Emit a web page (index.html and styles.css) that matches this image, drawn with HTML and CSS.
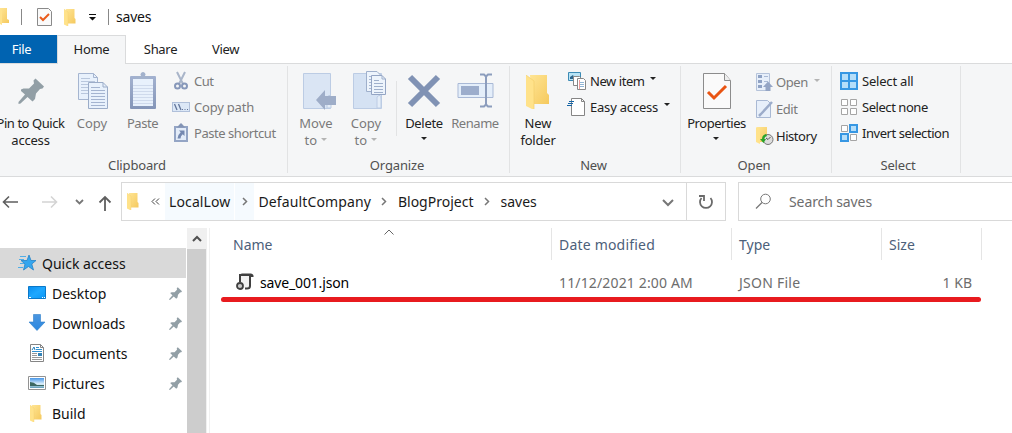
FILE: index.html
```
<!DOCTYPE html>
<html lang="en">
<head>
    <meta charset="UTF-8">
    <meta name="viewport" content="width=device-width, initial-scale=1.0">
    <title>saves</title>
    <link rel="stylesheet" href="styles.css">
</head>
<body>
    <!-- Shared icons -->
    <svg class="defs" width="0" height="0">
        <defs>
            <linearGradient id="gold" x1="0" y1="0" x2="1" y2="1">
                <stop offset="0" stop-color="#ffe594"/>
                <stop offset="1" stop-color="#f5c95e"/>
            </linearGradient>
            <linearGradient id="blue" x1="0" y1="0" x2="1" y2="1">
                <stop offset="0" stop-color="#0a8df0"/>
                <stop offset="0.5" stop-color="#1ea8ff"/>
                <stop offset="1" stop-color="#0b97f5"/>
            </linearGradient>
            <linearGradient id="arrow" x1="0" y1="0" x2="0" y2="1">
                <stop offset="0" stop-color="#4b96e0"/>
                <stop offset="1" stop-color="#2b88e0"/>
            </linearGradient>
            <linearGradient id="sky" x1="0" y1="0" x2="0" y2="1">
                <stop offset="0" stop-color="#4796e8"/>
                <stop offset="0.6" stop-color="#dff1fb"/>
                <stop offset="1" stop-color="#5c9ab5"/>
            </linearGradient>
            <linearGradient id="slate" x1="0" y1="0" x2="0" y2="1">
                <stop offset="0" stop-color="#a3b2d0"/>
                <stop offset="1" stop-color="#8495b8"/>
            </linearGradient>
            <symbol id="folder" viewBox="0 0 24 34">
                <path d="M4 0H21V18L23 20V29H6Z" fill="url(#gold)"/>
                <path d="M0 0L8 6V35L0 31Z" fill="#ffe28a"/>
                <path d="M0 0L8 6V35" fill="none" stroke="#f3cf6c" stroke-width="0.7"/>
            </symbol>
            <symbol id="pin" viewBox="0 0 26 26">
                <path d="M17.500 0.500L26 8.500L24.500 10.500L22 11L18 15.500L17 21L14.500 23.500L9.500 19L2.500 25.500L0.500 26V24L7 16.500L3 13V11.500L5.500 10.500L11 10.500L16 5.500L15.500 2.500Z" fill="#929fa6"/>
            </symbol>
            <symbol id="page" viewBox="0 0 30 36">
                <path d="M0.500 0.500H15.500L19.500 4.500V26.500H0.500Z" fill="#e8f1fc" stroke="#a5b5d0"/>
                <path d="M15.500 0.500V4.500H19.500" fill="none" stroke="#a5b5d0"/>
                <path d="M3 5.500H12M3 8.500H17M3 11.500H17M3 14.500H17M3 17.500H17M3 20.500H17" stroke="#b9c7dd"/>
                <path d="M10.500 9.500H25L29.500 14V35.500H10.500Z" fill="#e8f1fc" stroke="#9bacc8"/>
                <path d="M25 9.500V14H29.500" fill="none" stroke="#9bacc8"/>
                <path d="M13 14.500H22M13 17.500H27M13 20.500H27M13 23.500H27M13 26.500H27M13 29.500H27M13 32.500H27" stroke="#a4b4d0"/>
            </symbol>
        </defs>
    </svg>

    <div class="titlebar">
        <svg class="tb-edge" width="10" height="18"><path d="M0 0H7V11L9 12V15H0Z" fill="url(#gold)"/><path d="M0 2L2 3V17L0 16Z" fill="#ffe28a"/></svg>
        <span class="tb-line"></span>
        <svg class="tb-check" width="15" height="18"><path d="M0.500 0.500H11.500L14.500 3.500V17.500H0.500Z" fill="#fafafa" stroke="#8a8a8a"/><path d="M3 9L6 12L12 6" fill="none" stroke="#e95b1b" stroke-width="2"/></svg>
        <svg class="tb-folder" width="12" height="17"><use href="#folder"/></svg>
        <svg class="tb-menu" width="7" height="7"><path d="M0 0H7V1H0ZM0 3H7L3.500 6.500Z" fill="#111"/></svg>
        <span class="tb-line"></span>
        <span class="tb-title">saves</span>
    </div>

    <div class="tabs">
        <div class="tab file">File</div>
        <div class="tab home">Home</div>
        <div class="tab share">Share</div>
        <div class="tab view">View</div>
    </div>

    <div class="ribbon">
        <div class="group clipboard">
            <div class="group-body">
                <div class="big pin">
                    <svg width="40" height="40"><use href="#pin" x="8" y="7" width="26" height="26"/></svg>
                    <span class="tight">Pin to Quick</span><span class="snug">access</span>
                </div>
                <div class="big copy disabled">
                    <svg width="40" height="40"><use href="#page" x="6" y="2" width="30" height="36"/></svg>
                    <span>Copy</span>
                </div>
                <div class="big paste disabled">
                    <svg width="40" height="40">
                        <rect x="7" y="5" width="26" height="33" rx="1" fill="url(#slate)"/>
                        <rect x="10" y="8" width="20" height="27" fill="#e8f1fc"/>
                        <path d="M10 14.500H30M10 17.500H30M10 20.500H30M10 23.500H30M10 26.500H30M10 29.500H30M10 32.500H30" stroke="#cfdaec"/>
                        <path d="M12 8L14 5H18A2.500 2.500 0 1 1 22 5H26L28 8Z" fill="#a3b2cc"/>
                    </svg>
                    <span class="tight">Paste</span>
                </div>
                <div class="smalls disabled">
                    <div class="small"><svg width="18" height="18"><path d="M5 0L11 12M13 0L7 12" stroke="#a9b5c9" stroke-width="2"/><circle cx="5.500" cy="14" r="2.500" fill="none" stroke="#8798ba" stroke-width="2"/><circle cx="12.500" cy="14" r="2.500" fill="none" stroke="#8798ba" stroke-width="2"/></svg><span class="tight">Cut</span></div>
                    <div class="small"><svg width="18" height="18"><rect x="0.500" y="4.500" width="17" height="9" fill="#dce8f7" stroke="#b0c0da"/><path d="M2.500 6L5 12M6.500 6L9 12" stroke="#63769b" stroke-width="1.300"/><path d="M10 11.500H11M12.500 11.500H13.500M15 11.500H16" stroke="#63769b"/></svg><span class="snug">Copy path</span></div>
                    <div class="small"><svg width="18" height="18"><path d="M2 2H16V18H2Z" fill="#94a5c5"/><path d="M4 4H14V16H4Z" fill="#e3ecf9"/><path d="M5 3.500L7 1L9 -1L11 1L13 3.500Z" fill="#8394b5"/><path d="M7 6.500H12.500V12L10.700 10.200Q8.500 12 8.500 14.500H5.500Q5.500 11 8.700 8.200Z" fill="#7488b0"/></svg><span class="tight">Paste shortcut</span></div>
                </div>
            </div>
            <div class="group-name">Clipboard</div>
        </div>

        <div class="group organize">
            <div class="group-body">
                <div class="big move disabled">
                    <svg width="40" height="40"><path d="M7.500 2.500H34.500V37.500H7.500Z" fill="#dae5f4" stroke="#bccce4"/><path d="M31 26Q35 22 35 28V37H31Z" fill="#e4edf8" stroke="#bccce4"/><path d="M20 29L29 19V25H40V34H29V39Z" fill="#9eadc8"/></svg>
                    <span>Move</span><span class="drop">to <i></i></span>
                </div>
                <div class="big copyto disabled">
                    <svg width="40" height="40">
                        <path d="M7.500 2.500H35.500V37.500H7.500Z" fill="#d5e2f3" stroke="#bccce4"/>
                        <path d="M31 26Q35 22 35 28V37H31Z" fill="#e4edf8" stroke="#bccce4"/>
                        <path d="M20.500 0.500H31L34.500 4V20.500H20.500Z" fill="#edf4fc" stroke="#9fb0cc"/>
                        <path d="M23 5.500H28M23 8.500H32M23 11.500H32M23 14.500H32M23 17.500H32" stroke="#a9b9d4"/>
                        <path d="M25.500 4.500H36L39.500 8V23.500H25.500Z" fill="#edf4fc" stroke="#94a5c4"/>
                        <path d="M36 4.500V8H39.500M28 9.500H33M28 12.500H37M28 15.500H37M28 18.500H37M28 21.500H37" fill="none" stroke="#9fb0cc"/>
                    </svg>
                    <span>Copy</span><span class="drop">to <i></i></span>
                </div>
                <span class="mini-line"></span>
                <div class="big delete">
                    <svg width="40" height="40"><path d="M6 6L34 34M34 6L6 34" stroke="#8092b4" stroke-width="6"/></svg>
                    <span class="delete-text">Delete</span><span class="drop only"><i></i></span>
                </div>
                <div class="big rename disabled">
                    <svg width="40" height="40"><path d="M3 12.500H38V26.500H3Z" fill="#e4eefa" stroke="#a9b9d6"/><path d="M6 15H24V24H6Z" fill="#9cadcc"/><path d="M25 3.500H29L31 5.500L33 3.500H37M31 5V33M25 35.500H29L31 33.500L33 35.500H37" fill="none" stroke="#8c9dbd" stroke-width="2"/></svg>
                    <span class="tight">Rename</span>
                </div>
            </div>
            <div class="group-name">Organize</div>
        </div>

        <div class="group new">
            <div class="group-body">
                <div class="big newfolder">
                    <svg width="40" height="40"><use href="#folder" x="8" y="4" width="24" height="34"/></svg>
                    <span>New</span><span class="snug">folder</span>
                </div>
                <div class="smalls">
                    <div class="small"><svg width="18" height="18"><path d="M0.500 0.500H12.500V8.500H0.500Z" fill="#b8e3f5" stroke="#3c8bb5"/><path d="M2 5L5 3L7 7H2Z" fill="#2c658c"/><path d="M5.500 4.500H11.500L13.500 6.500V13.500H5.500Z" fill="#fff" stroke="#888"/><path d="M9.500 6.500H15.500L17.500 8.500V17.500H9.500Z" fill="#fff" stroke="#888"/><path d="M11 10.500H16M11 12.500H16M11 14.500H16" stroke="#91b6d6"/><path d="M11.500 8V17" stroke="#e99"/></svg><span class="tight">New item</span><i></i></div>
                    <div class="small"><svg width="18" height="18"><path d="M3.500 0.500H13.500L16.500 3.500V17.500H3.500Z" fill="#fff" stroke="#858585"/><path d="M13.500 0.500V3.500H16.500" fill="none" stroke="#858585"/><path d="M1 3.500H6M0 5.500H5M-1 7.500H4" stroke="#1666a8" stroke-width="1.200"/></svg><span class="snug">Easy access</span><i></i></div>
                </div>
            </div>
            <div class="group-name">New</div>
        </div>

        <div class="group open">
            <div class="group-body">
                <div class="big properties">
                    <svg width="40" height="40"><path d="M6.500 2.500H27.500L33.500 9.500V37.500H6.500Z" fill="#fafafa" stroke="#8c8c8c"/><path d="M27.500 2.500V9.500H33.500" fill="#eee" stroke="#8c8c8c"/><path d="M11 21L17 27L29 15" fill="none" stroke="#e95412" stroke-width="3"/></svg>
                    <span class="tight">Properties</span><span class="drop only"><i></i></span>
                </div>
                <div class="smalls">
                    <div class="small disabled"><svg width="18" height="18"><path d="M0.500 0.500H13.500V17.500H0.500Z" fill="#e7effa" stroke="#b5c3da"/><path d="M2 2H6V5H2ZM2 7H6V10H2ZM2 12H6V15H2Z" fill="#8fa2c4"/><path d="M8 3.500H12M8 8.500H12" stroke="#a9b9d4"/><path d="M7 14L12 8.500L17 14H14.500V18H9.500V14Z" fill="#94a5c5"/></svg><span class="tight">Open</span><i></i></div>
                    <div class="small disabled"><svg width="18" height="18"><path d="M0.500 0.500H11.500L14.500 3.500V17.500H0.500Z" fill="#e7effa" stroke="#a9b9d4"/><path d="M16 2L5 14L3 16" fill="none" stroke="#9cacca" stroke-width="2.500"/></svg><span class="tight">Edit</span></div>
                    <div class="small"><svg width="18" height="18"><path d="M1 0H11V15H2Z" fill="url(#gold)"/><path d="M0 0L4 3V17L0 15Z" fill="#ffe28a"/><circle cx="12" cy="12.500" r="5" fill="#ddd" stroke="#777"/><path d="M12 12.500L14.500 10M12 12.500L10 11" stroke="#555"/><path d="M10 7Q6 8 6 12H4L7.500 16L10 12H8.500Q8 10 11 9Z" fill="#29a329"/></svg><span class="tight">History</span></div>
                </div>
            </div>
            <div class="group-name">Open</div>
        </div>

        <div class="group select">
            <div class="group-body">
                <div class="smalls">
                    <div class="small"><svg width="18" height="18"><path d="M1 1H17V17H1ZM9 1V17M1 9H17" fill="#b5def9" stroke="#3797e3" stroke-width="2"/></svg><span class="snug">Select all</span></div>
                    <div class="small"><svg width="18" height="18"><path d="M1.500 1.500H7.500V7.500H1.500ZM10.500 1.500H16.500V7.500H10.500ZM1.500 10.500H7.500V16.500H1.500ZM10.500 10.500H16.500V16.500H10.500Z" fill="#fff" stroke="#a5a5a5"/></svg><span class="tight">Select none</span></div>
                    <div class="small"><svg width="18" height="18"><path d="M1.500 1.500H7.500V7.500H1.500ZM10.500 10.500H16.500V16.500H10.500Z" fill="#fff" stroke="#a5a5a5"/><path d="M10 1H17V8H10ZM1 10H8V17H1Z" fill="#b5def9" stroke="#3797e3" stroke-width="2"/></svg><span class="tight">Invert selection</span></div>
                </div>
            </div>
            <div class="group-name">Select</div>
        </div>
    </div>

    <div class="nav">
        <svg class="nav-arrows" width="121" height="38">
            <path d="M3.500 20H18M9 14.500L3.500 20L9 25.500" fill="none" stroke="#5f5f5f" stroke-width="1.600"/>
            <path d="M42 20H56M51 14.500L56.500 20L51 25.500" fill="none" stroke="#d4d4d4" stroke-width="1.600"/>
            <path d="M76 18L79.500 21.500L83 18" fill="none" stroke="#777" stroke-width="1.800"/>
            <path d="M105 29V15M99.500 20.500L105 15L110.500 20.500" fill="none" stroke="#5f5f5f" stroke-width="1.800"/>
        </svg>
        <div class="address">
            <svg class="addr-folder" width="12" height="17"><use href="#folder"/></svg>
            <svg class="addr-more" width="9" height="7"><path d="M4 0.500L1 3.500L4 6.500M8 0.500L5 3.500L8 6.500" fill="none" stroke="#444"/></svg>
            <div class="crumb hover"><span class="wide">LocalLow</span></div>
            <div class="chev hover"><svg width="6" height="9"><path d="M1 1L4.500 4.500L1 8" fill="none" stroke="#777" stroke-width="1.500"/></svg></div>
            <div class="crumb"><span class="wide">DefaultCompany</span></div>
            <div class="chev"><svg width="6" height="9"><path d="M1 1L4.500 4.500L1 8" fill="none" stroke="#777" stroke-width="1.500"/></svg></div>
            <div class="crumb"><span>BlogProject</span></div>
            <div class="chev"><svg width="6" height="9"><path d="M1 1L4.500 4.500L1 8" fill="none" stroke="#777" stroke-width="1.500"/></svg></div>
            <div class="crumb"><span>saves</span></div>
            <svg class="addr-drop" width="12" height="8"><path d="M1 1L6 6L11 1" fill="none" stroke="#777" stroke-width="2"/></svg>
            <div class="refresh"><svg width="16" height="16"><path d="M3.500 4A6 6 0 1 0 12.500 4M1 2H6V7" fill="none" stroke="#6a6a6a" stroke-width="1.800"/></svg></div>
        </div>
        <div class="search">
            <svg width="17" height="17"><circle cx="10.500" cy="6" r="4.800" fill="none" stroke="#777"/><path d="M7 9.500L1 15.500" stroke="#777" stroke-width="1.200"/></svg>
            <span>Search saves</span>
        </div>
    </div>

    <div class="content">
        <div class="sidebar">
            <div class="item root">
                <svg width="18" height="16"><path d="M11 0L13 5.500H18L13.800 9L15.500 15L10.500 11.500L5.500 15L7 9L3 5.500H9Z" fill="#35a6ee" stroke="#2583c8" stroke-width="0.800"/><path d="M2 1.500H8M1 4.500H6M2 8.500H6M0 12.500H5" stroke="#4faee8"/></svg>
                <span>Quick access</span>
            </div>
            <div class="item">
                <svg width="18" height="18"><path d="M0.500 2.500H17.500V14.500H0.500Z" fill="url(#blue)" stroke="#0b78c8"/><path d="M1 13.500H3M14 13.500H15M16 13.500H17" stroke="#fff"/></svg>
                <span>Desktop</span><svg class="side-pin" width="13" height="13"><use href="#pin"/></svg>
            </div>
            <div class="item">
                <svg width="18" height="18"><path d="M5.500 0.500H12.500V8H17L9 16.500L1 8H5.500Z" fill="url(#arrow)" stroke="#2c7dca" stroke-width="0.600"/></svg>
                <span>Downloads</span><svg class="side-pin" width="13" height="13"><use href="#pin"/></svg>
            </div>
            <div class="item">
                <svg width="18" height="18"><path d="M2.500 0.500H12.500L15.500 3.500V17.500H2.500Z" fill="#fff" stroke="#858585"/><path d="M12.500 0.500V3.500H15.500" fill="none" stroke="#858585"/><path d="M4 6L6 3L7 6" fill="none" stroke="#2881bd"/><path d="M8 3.500H11M8 5.500H14M4 7.500H14" stroke="#3190cf"/><path d="M4 9.500H9M4 11.500H9M4 13.500H14M4 15.500H14" stroke="#999"/><path d="M10 9H14V12H10Z" fill="#3482b5"/></svg>
                <span>Documents</span><svg class="side-pin" width="13" height="13"><use href="#pin"/></svg>
            </div>
            <div class="item">
                <svg width="18" height="18"><path d="M0.500 2.500H17.500V15.500H0.500Z" fill="#fff" stroke="#929292"/><path d="M2 4H16V14H2Z" fill="url(#sky)"/><path d="M2 8Q6 8 9 11H16V12H2Z" fill="#3c6861"/></svg>
                <span>Pictures</span><svg class="side-pin" width="13" height="13"><use href="#pin"/></svg>
            </div>
            <div class="item">
                <svg width="18" height="18"><use href="#folder" x="2" y="1" width="12" height="17"/></svg>
                <span>Build</span>
            </div>
        </div>
        <div class="scrollbar">
            <div class="scroll-up"><svg width="10" height="7"><path d="M1 6L5 2L9 6" fill="none" stroke="#505050" stroke-width="2"/></svg></div>
        </div>
        <div class="files">
            <div class="row head">
                <div class="cell name">Name<svg class="sort" width="10" height="6"><path d="M0.500 5.500L5 1L9.500 5.500" fill="none" stroke="#666"/></svg></div>
                <div class="cell date">Date modified</div>
                <div class="cell">Type</div>
                <div class="cell">Size</div>
            </div>
            <div class="row file-row">
                <div class="cell name">
                    <svg width="18" height="18"><path d="M4 9V2H14V13Q14 15.500 11 15.500H9" fill="#f2f2f2" stroke="#404040" stroke-width="2"/><path d="M4 2Q4 0.500 6 0.500H15Q18 1 17.500 4H14V2.500H4Z" fill="#404040"/><circle cx="4" cy="13" r="3" fill="#ccc" stroke="#404040" stroke-width="1.800"/></svg>
                    <span>save_001.json</span>
                </div>
                <div class="cell stamp">11/12/2021 2:00 AM</div>
                <div class="cell kind">JSON File</div>
                <div class="cell right">1 KB</div>
            </div>
            <div class="marker"></div>
        </div>
    </div>
</body>
</html>
```
FILE: styles.css
```
* {
    box-sizing: border-box;
}
body {
    margin: 0;
    width: 1012px;
    height: 433px;
    overflow: hidden;
    background-color: #fff;
    font-family: "Noto Sans", "Open Sans", sans-serif;
    font-size: 13px;
    color: #222;
    white-space: nowrap;
}
svg {
    display: block;
    flex: none;
    overflow: visible;
}
.defs {
    position: absolute;
}
.tight {
    letter-spacing: -0.45px;
}
.snug {
    letter-spacing: -0.2px;
}
.wide {
    letter-spacing: 0.12px;
}

/* Title bar */
.titlebar {
    height: 35px;
    display: flex;
    align-items: center;
    padding-bottom: 1px;
}
.tb-line {
    width: 1px;
    height: 16px;
    background-color: #888;
    margin-left: 11px;
}
.tb-check {
    margin-left: 15px;
}
.tb-folder {
    margin-left: 12px;
}
.tb-menu {
    margin-left: 13px;
}
.tb-menu + .tb-line {
    margin-left: 12px;
}
.tb-title {
    margin: -2px 0 0 7px;
    font-size: 14px;
    letter-spacing: -0.2px;
    color: #111;
}

/* Tabs */
.tabs {
    height: 29px;
    display: flex;
    border-bottom: 1px solid #dadbdc;
}
.tab {
    height: 29px;
    line-height: 28px;
    text-align: center;
    letter-spacing: -0.3px;
}
.file {
    width: 57px;
    height: 28px;
    padding-right: 14px;
    background-color: #0063b1;
    color: #fff;
}
.home {
    width: 69px;
    background-color: #f5f6f7;
    border: 1px solid #dadbdc;
    border-bottom: none;
    line-height: 27px;
}
.share {
    width: 69px;
}
.view {
    width: 61px;
}

/* Ribbon */
.ribbon {
    height: 113px;
    display: flex;
    background-color: #f5f6f7;
    border-bottom: 1px solid #dadbdc;
    padding: 2px 0 3px;
}
.group {
    display: flex;
    flex-direction: column;
    border-right: 1px solid #e2e3e4;
}
.group-body {
    display: flex;
    flex: 1;
    padding-top: 5px;
}
.group-name {
    height: 18px;
    line-height: 20px;
    text-align: center;
    letter-spacing: -0.15px;
    color: #505050;
}
.clipboard {
    width: 288px;
}
.clipboard .group-name {
    padding-right: 13px;
}
.organize {
    width: 222px;
    padding-left: 3px;
}
.organize .group-name {
    padding-right: 6px;
}
.new {
    width: 171px;
    padding-left: 1px;
}
.open {
    width: 151px;
}
.select {
    width: 129px;
    padding-left: 8px;
}
.new .group-name,
.open .group-name,
.select .group-name {
    padding-right: 4px;
}
.big {
    display: flex;
    flex-direction: column;
    align-items: center;
    width: 50px;
    line-height: 17px;
}
.big svg {
    margin-bottom: 4px;
}
.pin {
    width: 72px;
    margin-left: -6px;
}
.pin span {
    margin-left: 1px;
}
.copy {
    width: 52px;
}
.paste span {
    margin-right: 1px;
}
.delete,
.newfolder {
    width: 54px;
}
.rename {
    width: 48px;
}
.properties {
    width: 71px;
}
.delete-text {
    letter-spacing: -0.3px;
}
.disabled {
    color: #7a7a7a;
}
i {
    display: inline-block;
    border: 3.5px solid transparent;
    border-top-color: #222;
    border-bottom: none;
}
.disabled i {
    border-top-color: #b4b4b4;
}
.drop i {
    vertical-align: 4px;
    margin-left: 1px;
}
.only {
    margin: -1px 2px 0 0;
}
.mini-line {
    width: 1px;
    height: 55px;
    margin: 10px 0 0 5px;
    background-color: #e2e3e4;
}
.smalls {
    margin: -1px 0 0 3px;
}
.clipboard .smalls {
    margin-left: 4px;
}
.open .smalls {
    margin-left: 4px;
}
.select .smalls {
    margin-left: 0;
}
.small {
    height: 26px;
    padding-bottom: 5px;
    display: flex;
    align-items: center;
}
.open .small {
    height: 27px;
    padding-bottom: 3px;
}
.small svg {
    margin-right: 4px;
}
.open .small svg {
    margin-right: 2px;
}
.small i {
    margin: -4px 0 0 6px;
}

/* Address row */
.nav {
    height: 51px;
    display: flex;
    padding-top: 5px;
}
.address {
    width: 605px;
    height: 39px;
    display: flex;
    flex: none;
    align-items: center;
    border: 1px solid #d9d9d9;
    font-size: 14px;
    color: #1a1a1a;
}
.addr-folder {
    margin-left: 5px;
}
.addr-more {
    margin: 0 5px 0 12px;
}
.crumb,
.chev {
    height: 37px;
    display: flex;
    align-items: center;
}
.crumb {
    padding: 0 4px;
}
.chev {
    width: 19px;
    justify-content: center;
}
.hover {
    background-color: #f5fafe;
}
.chev.hover {
    width: 20px;
    border-left: 1px solid #fff;
}
.addr-drop {
    margin: 2px 12px 0 auto;
}
.refresh {
    width: 39px;
    height: 37px;
    display: flex;
    align-items: center;
    justify-content: center;
    border-left: 1px solid #d9d9d9;
}
.search {
    flex: 1;
    height: 39px;
    margin-left: 12px;
    display: flex;
    align-items: center;
    border: 1px solid #d9d9d9;
    border-right: none;
    padding-left: 16px;
    font-size: 14px;
    letter-spacing: -0.1px;
    color: #6d6d6d;
}
.search span {
    margin-left: 17px;
}

/* Folder tree and file list */
.content {
    height: 205px;
    display: flex;
    font-size: 14px;
    color: #111;
}
.sidebar {
    width: 187px;
    padding-top: 20px;
}
.item {
    width: 186px;
    height: 30px;
    display: flex;
    align-items: center;
    padding-left: 28px;
}
.item span {
    margin-left: 6px;
}
.root {
    padding-left: 18px;
    background-color: #d9d9d9;
}
.side-pin {
    margin: 0 4px 0 auto;
}
.scrollbar {
    width: 20px;
    background-color: #cdcdcd;
    border-right: 1px solid #f0f0f0;
}
.scroll-up {
    height: 21px;
    display: flex;
    align-items: center;
    justify-content: center;
    background-color: #f0f0f0;
}
.files {
    position: relative;
    width: 773px;
    margin-left: 2px;
    border-left: 1px solid #f0f0f0;
}
.row {
    display: grid;
    grid-template-columns: 342px 180px 150px 100px;
}
.cell {
    display: flex;
    align-items: center;
    padding-left: 7px;
}
.head {
    height: 32px;
    color: #4c607a;
}
.head .cell {
    border-right: 1px solid #e5e5e5;
}
.head .name {
    padding-left: 23px;
}
.date {
    letter-spacing: 0.2px;
}
.sort {
    position: absolute;
    left: 174px;
    top: 1px;
}
.file-row {
    height: 44px;
    color: #6d6d6d;
}
.file-row .name {
    padding-left: 26px;
    letter-spacing: -0.15px;
    color: #000;
}
.file-row .name span {
    margin-left: 6px;
}
.stamp {
    letter-spacing: 0.15px;
}
.kind {
    letter-spacing: 0.25px;
}
.right {
    justify-content: flex-end;
    padding-right: 10px;
}
/* red line under the save file */
.marker {
    position: absolute;
    left: 11px;
    top: 69px;
    width: 760px;
    height: 5px;
    border-radius: 3px;
    background-color: #e81b1f;
}
```
